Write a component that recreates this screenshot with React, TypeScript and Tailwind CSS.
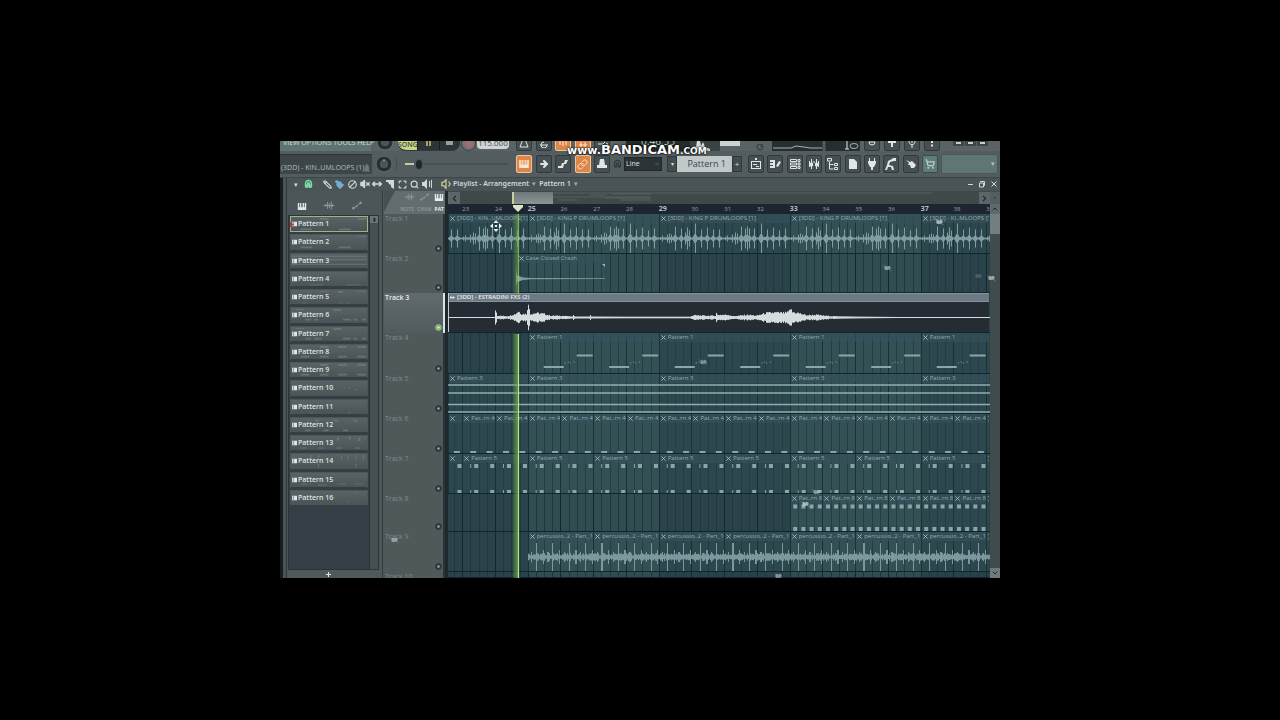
import type { ReactNode } from 'react';
import {
  ArrowRight,
  Ban,
  ChevronDown,
  ChevronLeft,
  ChevronRight,
  ChevronUp,
  Link,
  Magnet,
  Maximize,
  MoveHorizontal,
  Paintbrush,
  Pencil,
  Search,
  ShoppingCart,
  VolumeX,
} from 'lucide-react';

const VIEW_START = 22.566;
const BAR_PX = 32.75;
const VIEW_PX = 542;
const VIEW_BARS = VIEW_PX / BAR_PX;

const barToPx = (bar: number) => (bar - VIEW_START) * BAR_PX;
const barToPct = (bar: number) => `${((bar - VIEW_START) / VIEW_BARS) * 100}%`;
const spanToPct = (bars: number) => `${(bars / VIEW_BARS) * 100}%`;

interface ClipData {
  start: number;
  end: number;
  name: string;
}

interface TrackData {
  name: string;
  height: string;
  px: number;
  clips: ClipData[];
  art?: ReactNode;
}

const repeatClips = (from: number, step: number, name: string, first?: string): ClipData[] => {
  const clips: ClipData[] = first === undefined ? [] : [{ start: VIEW_START, end: from, name: first }];
  for (let bar = from; bar < 39.1; bar += step) {
    clips.push({ start: bar, end: Math.min(bar + step, 39.1), name });
  }
  return clips;
};

// [x, half height] pairs over the four bars of the drum loop
const DRUM_PEAKS: [number, number][] = [
  [3, 3], [8, 4], [10, 5], [12, 4], [16, 12], [22, 10], [26, 6], [28, 11], [30, 8], [36, 15],
  [42, 9], [48, 11], [54, 9], [60, 9], [66, 2], [68, 3], [73, 4], [76, 6], [78, 5], [82, 12],
  [86, 10], [88, 12], [90, 10], [95, 10], [102, 15], [108, 9], [114, 11], [120, 8], [126, 10],
];

const noise = (n: number) => {
  const v = Math.sin(n * 12.9898) * 43758.5453;
  return v - Math.floor(v);
};

function drumPath() {
  let d = '';
  for (let x = 0; x < VIEW_PX; x += 1) {
    const phase = (((x - barToPx(25)) % 131) + 131) % 131;
    let h = 0.8 + noise(Math.round(phase)) * 0.8;
    DRUM_PEAKS.forEach(([px, ph]) => {
      const dist = Math.abs(phase - px);
      if (dist < 0.6) h = Math.max(h, ph);
      else if (dist < 3) h = Math.max(h, (ph * 0.26 * (3.2 - dist)) / 2.2);
    });
    d += `M${x + 0.5} ${24.5 - h}V${24.5 + h}`;
  }
  return d;
}

function percussionPath() {
  let d = '';
  for (let x = Math.round(barToPx(25)); x < VIEW_PX; x += 1) {
    const phase = (x - barToPx(25)) % 16.375;
    let h = 1.5 + noise(x) * 2.5;
    if (Math.abs(phase - 8.3) < 0.6) h = 14;
    else if (Math.abs(phase - 15) < 0.6) h = 7;
    else if (Math.abs(phase - 3.5) < 0.6) h = 5;
    d += `M${x + 0.5} ${25 - h}V${25 + h}`;
  }
  return d;
}

const FX_ENVELOPE: [number, number][] = [
  [0, 0.5], [46, 0.5], [47, 8], [48, 7], [49, 2], [60, 1.5], [64, 3], [67, 4], [70, 7], [73, 4], [78, 4],
  [79, 11], [80, 13], [81, 10], [82, 4], [88, 5], [96, 4], [102, 2], [112, 2], [124, 1], [125, 2.5],
  [127, 1], [141, 1], [142, 2.5], [143, 1], [180, 0.8], [242, 0.8], [245, 2.5], [258, 2], [267, 2],
  [268, 5], [269, 3], [280, 3], [285, 1.5], [300, 3], [308, 2], [318, 5], [328, 5.5], [336, 5], [340, 6],
  [342, 10], [344, 6], [350, 5], [358, 2.5], [368, 3], [376, 2], [390, 1.2], [410, 0.9], [450, 0.5], [542, 0.5],
];

function fxPath() {
  let d = '';
  for (let i = 0; i < FX_ENVELOPE.length - 1; i += 1) {
    const [x0, h0] = FX_ENVELOPE[i];
    const [x1, h1] = FX_ENVELOPE[i + 1];
    for (let x = x0; x < x1; x += 1) {
      const base = h0 + ((h1 - h0) * (x - x0)) / (x1 - x0);
      const h = base > 1.5 ? base * (0.65 + noise(x) * 0.45) : base;
      d += `M${x + 0.5} ${24.5 - h}V${24.5 + h}`;
    }
  }
  return d;
}

const steps = (from: number, to: number, by: number) => {
  const out: number[] = [];
  for (let v = from; v < to; v += by) out.push(v);
  return out;
};

const NOTE = '#8ba5a8';

const TRACKS: TrackData[] = [
  {
    name: 'Track 1',
    height: 'h-10',
    px: 40,
    clips: [
      { start: VIEW_START, end: 25, name: '[3DD] - KIN..UMLOOPS[1]' },
      { start: 25, end: 29, name: '[3DD] - KING P DRUMLOOPS [1]' },
      { start: 29, end: 33, name: '[3DD] - KING P DRUMLOOPS [1]' },
      { start: 33, end: 37, name: '[3DD] - KING P DRUMLOOPS [1]' },
      { start: 37, end: 39.1, name: '[3DD] - KI..MLOOPS [1]' },
    ],
    art: <path d={drumPath()} stroke="#829da1" fill="none" />,
  },
  {
    name: 'Track 2',
    height: 'h-[39px]',
    px: 39,
    clips: [{ start: 24.66, end: 27.36, name: 'Case Closed Crash' }],
    art: (
      <>
        <path d="M68 15l1 6l2 1l4 1.500l8 .6l74 .2v.8l-74 .2l-8 .6l-4 1.500l-2 1l-1 4z" fill="#7f9c9d" />
        <path d="M154 10h3v3z" fill="#9db3b5" />
      </>
    ),
  },
  {
    name: 'Track 3',
    height: 'h-10',
    px: 40,
    clips: [{ start: VIEW_START, end: 39.1, name: '[3DD] - ESTRADINI FXS (2)' }],
    art: <path d={fxPath()} stroke="#d5dcdf" fill="none" />,
  },
  {
    name: 'Track 4',
    height: 'h-[41px]',
    px: 41,
    clips: repeatClips(25, 4, 'Pattern 1'),
    art: steps(25, 39, 2).map((bar) => (
      <g key={bar} transform={`translate(${barToPx(bar)} 0)`} fill={NOTE}>
        <path d="M16 33h20v2h-20zM49 21.500h16v2h-16z" />
        <path d="M37 29h1v2h-1zM40 28h1v2h-1zM42 29h1v2h-1zM46 28h1v2h-1z" opacity=".5" />
      </g>
    )),
  },
  {
    name: 'Track 5',
    height: 'h-10',
    px: 40,
    clips: repeatClips(25, 4, 'Pattern 3', 'Pattern 3'),
    art: <path d="M0 11h542M0 19h542M0 30.500h542M0 38h542" stroke="#8fadaf" strokeWidth="1.6" />,
  },
  {
    name: 'Track 6',
    height: 'h-10',
    px: 40,
    clips: repeatClips(23, 1, 'Pat..rn 4', ''),
    art: steps(22.5, 39, 0.5).map((bar) => (
      <rect key={bar} x={barToPx(bar) + 8} y="37" width="6" height="2" fill={NOTE} />
    )),
  },
  {
    name: 'Track 7',
    height: 'h-10',
    px: 40,
    clips: repeatClips(23, 2, 'Pattern 5', ''),
    art: steps(22, 39, 1).map((bar) => (
      <path
        key={bar}
        transform={`translate(${barToPx(bar)} 0)`}
        d="M8 10h1v4h-1zM12 10h4v4h-4zM28 10h4v4h-4zM8 36h1v3h-1zM12 36h4v3h-4zM28 36h4v3h-4z"
        fill={NOTE}
      />
    )),
  },
  {
    name: 'Track 8',
    height: 'h-[38px]',
    px: 38,
    clips: repeatClips(33, 1, 'Pat..rn 8'),
    art: steps(33, 39, 0.25).map((bar) => (
      <path
        key={bar}
        transform={`translate(${barToPx(bar)} 0)`}
        d="M3.500 10.500h4v4h-4zM3.500 33h4v4h-4z"
        fill={NOTE}
      />
    )),
  },
  {
    name: 'Track 9',
    height: 'h-10',
    px: 40,
    clips: repeatClips(25, 2, 'percussio..2 - Part_1'),
    art: <path d={percussionPath()} stroke="#7d989c" fill="none" />,
  },
  { name: 'Track 10', height: 'h-[6px]', px: 6, clips: [] },
];

const LONG_MARKS = [25, 29, 33, 37];

const PATTERNS: { name: string; art: string }[] = [
  { name: 'Pattern 1', art: 'M30 1h9v2h-9zM69 1h9v2h-9zM10 13h12v2h-12zM50 13h12v2h-12z' },
  { name: 'Pattern 2', art: 'M30 1h9v1h-9zM69 1h9v1h-9zM10 13h12v2h-12zM50 13h12v2h-12z' },
  { name: 'Pattern 3', art: 'M0 2h79v1h-79zM0 6h79v1h-79zM0 11h79v1h-79z' },
  { name: 'Pattern 4', art: 'M19 14h15v1h-15zM58 14h15v1h-15z' },
  { name: 'Pattern 5', art: 'M30 1h9v1h-9zM49 1h5v2h-5zM70 1h7v1h-7zM12 14h4v1h-4zM50 14h4v1h-4zM57 14h3v1h-3z' },
  { name: 'Pattern 6', art: 'M5 1h9v1h-9zM44 1h8v2h-8zM15 12h6v2h-6zM24 12h4v2h-4zM54 12h8v2h-8zM65 12h4v2h-4zM74 12h4v2h-4z' },
  { name: 'Pattern 7', art: 'M5 1h9v1h-9zM44 1h8v2h-8zM15 12h6v2h-6zM24 12h8v2h-8zM54 12h8v2h-8zM65 12h4v2h-4zM74 12h4v2h-4z' },
  { name: 'Pattern 8', art: 'M30 1h9v2h-9zM49 1h9v2h-9zM69 1h9v2h-9zM10 12h9v2h-9zM30 12h9v2h-9zM49 12h9v2h-9zM69 12h9v2h-9z' },
  { name: 'Pattern 9', art: 'M30 1h9v2h-9zM49 1h9v2h-9zM69 1h9v2h-9zM10 12h9v2h-9zM30 12h9v2h-9zM49 12h9v2h-9zM69 12h9v2h-9z' },
  { name: 'Pattern 10', art: 'M44 9h2v1h-2zM54 8h2v1h-2zM60 7h2v1h-2zM66 9h2v1h-2z' },
  { name: 'Pattern 11', art: 'M20 14h3v1h-3zM59 14h3v1h-3z' },
  { name: 'Pattern 12', art: 'M25 2h4v2h-4zM45 2h4v2h-4zM65 2h4v2h-4zM15 13h5v2h-5zM34 13h5v2h-5zM54 13h5v2h-5z' },
  { name: 'Pattern 13', art: 'M48 2h2v3h-2zM60 1h2v3h-2zM70 2h2v4h-2zM10 13h6v1h-6zM28 13h6v1h-6zM47 13h6v1h-6zM66 13h6v1h-6z' },
  { name: 'Pattern 14', art: 'M20 1h1v5h-1zM28 1h1v4h-1zM52 2h1v5h-1zM59 1h1v6h-1zM67 2h1v5h-1zM75 1h1v6h-1zM28 11h1v4h-1zM67 11h1v4h-1z' },
  { name: 'Pattern 15', art: 'M10 12h8v1h-8zM28 13h9v1h-9zM48 12h9v1h-9zM66 12h10v1h-10z' },
  { name: 'Pattern 16', art: 'M44 7h2v1h-2zM67 1h2v1h-2zM58 12h2v1h-2z' },
];

function PianoIcon({ className }: { className: string }) {
  return (
    <svg viewBox="0 0 12 10" className={className} fill="currentColor">
      <path d="M0 0h2v6h1v-6h1.500v6h1v-6h1v6h1v-6h1.500v6h1v-6h2v10h-12z" />
    </svg>
  );
}

function WaveIcon({ className }: { className: string }) {
  return (
    <svg viewBox="0 0 12 10" className={className} stroke="currentColor" fill="none">
      <path d="M0 5h12M2.500 3.500v3M4.500 1v8M6.500 2.500v5M8.500 0.500v9M10 3.500v3" />
    </svg>
  );
}

function AutomationIcon({ className }: { className: string }) {
  return (
    <svg viewBox="0 0 12 10" className={className} stroke="currentColor" fill="currentColor">
      <path d="M2 8l3-2l5-4" fill="none" />
      <circle cx="2" cy="8" r="1" />
      <circle cx="5.500" cy="6" r=".6" />
      <circle cx="10" cy="2" r="1" />
    </svg>
  );
}

function Knob({ label }: { label: string }) {
  return (
    <button aria-label={label} className="flex items-center justify-center">
      <svg viewBox="0 0 18 18" className="size-[18px]">
        <circle cx="9" cy="9" r="8" fill="#2a3235" stroke="#6a7678" strokeWidth=".8" />
        <circle cx="9" cy="9" r="5" fill="#4a5558" stroke="#1c2326" />
        <path d="M9 4v2.500" stroke="#aab4b5" />
      </svg>
    </button>
  );
}

interface ToolButtonProps {
  label: string;
  active?: boolean;
  muted?: boolean;
  children: ReactNode;
}

function ToolButton({ label, active, muted, children }: ToolButtonProps) {
  const tone = active
    ? 'border-[#f3c39a] bg-[#de8648] text-[#fbe9d8]'
    : muted
      ? 'border-[#3c4a4b] bg-[#5f7d78] text-[#bccdca]'
      : 'border-[#30393b] bg-[#465052] text-[#dfe6e6]';
  return (
    <button
      aria-label={label}
      className={`flex h-[18px] w-4 shrink-0 items-center justify-center rounded-xs border ${tone}`}
    >
      {children}
    </button>
  );
}

function Glyph({ d, stroke }: { d: string; stroke?: boolean }) {
  return (
    <svg
      viewBox="0 0 12 12"
      className="size-3"
      fill={stroke ? 'none' : 'currentColor'}
      stroke={stroke ? 'currentColor' : 'none'}
    >
      <path d={d} />
    </svg>
  );
}

function TopRow() {
  return (
    <div className="flex h-[10px] items-end overflow-hidden bg-[#596365]">
      <div className="flex h-[18px] w-[91px] shrink-0 items-center bg-[#5d7471] pl-[3px] text-[7px] leading-none whitespace-nowrap text-[#d5dfdd]">
        VIEW OPTIONS TOOLS HELP
      </div>
      <div className="flex w-[27px] shrink-0 justify-center">
        <Knob label="Master volume" />
      </div>
      <div className="flex h-5 w-[62px] shrink-0 items-end overflow-hidden rounded-b-lg border-b border-[#30393b] bg-[#2c3437]">
        <button className="h-4 w-[19px] rounded-bl-lg bg-[#c5d68c] pt-[6px] text-[7px] leading-[8px] font-semibold text-[#46502f]">
          SONG
        </button>
        <button aria-label="Play" className="flex h-5 flex-1 justify-center border-x border-[#171d20] pt-2">
          <span className="h-2 w-[5px] border-x-2 border-[#a99f62]" />
        </button>
        <button aria-label="Stop" className="flex h-5 flex-1 justify-center pt-2">
          <span className="h-[7px] w-[7px] bg-[#959f9f]" />
        </button>
      </div>
      <button aria-label="Record" className="mx-[1px] flex size-[15px] shrink-0 items-center justify-center rounded-full border border-[#394244] bg-[#6b7476]">
        <span className="size-2 rounded-full bg-[#a06e6e]" />
      </button>
      <div className="mb-[2px] h-4 w-8 shrink-0 overflow-hidden rounded-sm bg-[#cfd5d5] pt-[5px] text-center text-[8px] leading-[10px] text-[#3f484a]">
        115.000
      </div>
      <div className="ml-[7px] flex w-[94px] shrink-0 justify-between">
        <ToolButton label="Metronome"><Glyph stroke d="M2 11l3-8h2l3 8z" /></ToolButton>
        <ToolButton label="Wait for input"><Glyph stroke d="M2 9h8M6 6a3 3 0 1 0 3 3" /></ToolButton>
        <ToolButton label="Count in" active><Glyph stroke d="M3 3v6M6 5v5M9 3v6" /></ToolButton>
        <ToolButton label="Loop record" active><Glyph stroke d="M2 9h8M4 6v5M8 6v5" /></ToolButton>
        <ToolButton label="Step edit"><Glyph stroke d="M2 8h5l2-2M8 9a2 2 0 1 0 2-2" /></ToolButton>
      </div>
      <div className="ml-4 flex h-5 w-[64px] shrink-0 items-center justify-center bg-[#232b2e] text-[10px] leading-none text-[#b8c6a6]">
        0:46:35
      </div>
      <svg viewBox="0 0 30 10" className="h-[10px] w-[30px] shrink-0 bg-[#394346]" fill="#d7dedf">
        <path d="M2 8l2-3l2 1l1-6h3l1 5l2-4l2 5l5 2v2z" />
      </svg>
      <div className="mb-[5px] h-2 w-5 shrink-0 bg-[#cbd3d3]" />
      <svg viewBox="0 0 8 8" className="ml-4 size-[8px] shrink-0" fill="none" stroke="#2f383a">
        <circle cx="4" cy="4" r="3" />
        <path d="M4 4l2-1.500" />
      </svg>
      <svg viewBox="0 0 88 10" className="ml-2 h-[10px] w-[88px] shrink-0 bg-[#262e31]" fill="none" stroke="#a3b1b1">
        <path d="M1 7h18l5-2l8 1l6 1h12" />
        <path d="M52 0v10" stroke="#515c5f" strokeWidth="3" />
        <path d="M75 0v8M73 8h4" stroke="#e2e8e8" />
        <ellipse cx="82" cy="5" rx="4" ry="2.500" />
      </svg>
      <div className="ml-1 flex w-[76px] shrink-0 justify-between">
        <ToolButton label="Undo"><Glyph stroke d="M3 6a3 3 0 1 0 6 0M3 6h6" /></ToolButton>
        <ToolButton label="Save"><Glyph d="M5 2h2v3h3v2h-3v4h-2v-4h-3v-2h3z" /></ToolButton>
        <ToolButton label="Microphone"><Glyph stroke d="M3 5c0 5 6 5 6 0M6 9v3M6 2v5" /></ToolButton>
        <ToolButton label="Help"><Glyph d="M5 3h2v4h-2zM5 8.500h2v2h-2z" /></ToolButton>
      </div>
      <div className="ml-auto flex gap-[1px] self-start pr-3">
        {['Minimize', 'Restore', 'Close'].map((label) => (
          <button key={label} aria-label={label} className="flex h-[5px] w-[11px] justify-center bg-[#3c4648]">
            <span className="mt-[1px] h-[2px] w-[5px] bg-[#c5cdcd]" />
          </button>
        ))}
      </div>
    </div>
  );
}

function MainToolbar() {
  return (
    <div className="flex h-[27px] items-center border-b border-[#3c4648] bg-[#535d5f]">
      <div className="flex h-5 w-[92px] shrink-0 items-end justify-between border-t border-[#2c3537] bg-[#3c4648] pr-[2px] pb-[1px] pl-[1px]">
        <span className="text-[7px] leading-[10px] whitespace-nowrap text-[#b3bdbd]">(3DD) - KIN..UMLOOPS (1)</span>
        <svg viewBox="0 0 8 10" className="h-[10px] w-[6px]" fill="#6e7a7b">
          <path d="M2 0h4v3h1v5h1v2h-8v-2h1v-5h1z" />
        </svg>
      </div>
      <div className="flex w-6 shrink-0 justify-center">
        <Knob label="Master pitch" />
      </div>
      <div className="flex w-[120px] shrink-0 items-center border-l border-[#464f51] px-2">
        <input
          type="range"
          aria-label="Main volume"
          defaultValue={10}
          className="h-3 w-full appearance-none rounded-sm bg-[linear-gradient(90deg,#c3d09a_9%,#475153_9%)] bg-[length:100%_2px] bg-center bg-no-repeat [&::-webkit-slider-thumb]:h-[11px] [&::-webkit-slider-thumb]:w-2 [&::-webkit-slider-thumb]:appearance-none [&::-webkit-slider-thumb]:rounded-full [&::-webkit-slider-thumb]:border [&::-webkit-slider-thumb]:border-[#4e5a5c] [&::-webkit-slider-thumb]:bg-[#20282b]"
        />
      </div>
      <div className="flex w-[94px] shrink-0 justify-between">
        <ToolButton label="Typing keyboard" active><PianoIcon className="h-2 w-3" /></ToolButton>
        <ToolButton label="Step"><ArrowRight size={10} strokeWidth={5} /></ToolButton>
        <ToolButton label="Slide"><Glyph d="M1 10v-2h3l1-3h2l1-3h3l-2 4h-2l-1 4z" /></ToolButton>
        <ToolButton label="Link" active><Link size={11} strokeWidth={2} /></ToolButton>
        <ToolButton label="Stamp"><Glyph d="M4 1h4l1 6h2v3h-10v-3h2z" /></ToolButton>
      </div>
      <div className="flex w-[14px] shrink-0 justify-center text-[#313a3c]">
        <Magnet size={9} strokeWidth={3} className="rotate-[-45deg]" />
      </div>
      <div className="relative flex w-[38px] shrink-0">
        <select
          aria-label="Snap"
          defaultValue="Line"
          className="h-[14px] w-full appearance-none border border-[#20282a] bg-[#2b3335] pl-[1px] text-[7px] leading-[12px] text-[#dfe6e6]"
        >
          <option>Line</option>
          <option>Beat</option>
        </select>
        <ChevronDown size={6} className="pointer-events-none absolute top-1 right-[2px] text-[#8c9798]" />
      </div>
      <div className="ml-[5px] flex shrink-0">
        <button aria-label="Previous pattern" className="flex h-4 w-[10px] items-center justify-center border border-[#2f383a] bg-[#424c4e] text-[6px] text-[#d5dcdc]">▾</button>
        <button className="h-4 w-[55px] bg-[#c0c8ca] pr-[6px] text-right text-[9px] leading-4 whitespace-nowrap text-[#3c4648]">
          Pattern 1
        </button>
        <button aria-label="Add pattern" className="flex h-4 w-[10px] items-center justify-center border border-[#2f383a] bg-[#424c4e] text-[8px] leading-none text-[#d5dcdc]">+</button>
      </div>
      <div className="ml-[6px] flex w-[190px] shrink-0 justify-between">
        <ToolButton label="Playlist"><Glyph d="M5 0h2v2h-2zM1 3h10v1h-10zM1 4h1v7h-1zM10 4h1v7h-1zM1 10h10v1h-10zM3 6h4v1h-4zM6 8h3v1h-3z" /></ToolButton>
        <ToolButton label="Piano roll"><Glyph d="M1 2h5v8h-5v-2h3v-1h-3v-2h3v-1h-3zM7 8l3-5l2 1l-3 5z" /></ToolButton>
        <ToolButton label="Channel rack"><Glyph stroke d="M1.500 1.500h6v2h-6zM1.500 5h6v2h-6zM1.500 8.500h6v2h-6zM9 1.500h2v2h-2zM9 5h2v2h-2zM9 8.500h2v2h-2z" /></ToolButton>
        <ToolButton label="Mixer"><Glyph stroke d="M3.500 1v10M8.500 1v10M1.500 3v6M10.500 3v6M6 3v2M2.500 5h2v3h-2zM7.500 5h2v3h-2z" /></ToolButton>
        <ToolButton label="Browser"><Glyph stroke d="M.5.500h4v2.500h-4zM2.500 4v7h4M2.500 6.500h4M7.500 5.500h3v2h-3zM7.500 9.500h3v2h-3z" /></ToolButton>
        <ToolButton label="New file"><Glyph d="M2 1h5l3 3v7h-8z" /></ToolButton>
        <ToolButton label="Plugins"><Glyph d="M3 0h1v3h4v-3h1v3h1v2l-2 4h-1v3h-2v-3h-1l-2-4v-2h1z" /></ToolButton>
        <ToolButton label="Performance"><Glyph d="M8 0h3v3h-2l-4 1l-1 3l4 1l1 4h-2l-1-3h-3l-1 3h-2l2-5l1-4l4-2z" /></ToolButton>
        <ToolButton label="Touch"><Glyph d="M1 2l4 2l2-1l4 4l-2 3h-3l-1-3h-2l1-2z" /></ToolButton>
        <ToolButton label="Shop" muted><ShoppingCart size={10} strokeWidth={3} /></ToolButton>
      </div>
      <div className="mr-[2px] ml-[3px] flex h-5 flex-1 items-center justify-end border border-[#46585a] bg-[#5f7673] pr-[2px] text-[7px] text-[#b5c3c0]">
        ▾
      </div>
    </div>
  );
}

function TitleBar() {
  const tool = 'flex w-[12px] justify-center';
  return (
    <div className="flex h-[13px] items-center bg-[#4a5456] pb-px text-[#d0d8d8]">
      <div className="flex items-center pl-[3px]">
        <button aria-label="Menu" className="w-[12px] text-center text-[7px] leading-none">▾</button>
        <button aria-label="Snap to grid" className="flex w-[12px] justify-center text-[#7fdca6]"><Magnet size={9} strokeWidth={4} className="rotate-[-45deg]" /></button>
      </div>
      <div className="ml-[7px] flex w-[112px] items-center justify-between">
        <button aria-label="Draw" className={tool}><Pencil size={9} strokeWidth={3} className="-scale-x-100" /></button>
        <button aria-label="Paint" className="flex w-[12px] justify-center text-[#6fb3d4]"><Paintbrush size={9} strokeWidth={3} fill="currentColor" className="-scale-x-100" /></button>
        <button aria-label="Delete" className={tool}><Ban size={9} strokeWidth={3} className="-scale-x-100" /></button>
        <button aria-label="Mute" className={tool}><VolumeX size={10} strokeWidth={3} fill="currentColor" /></button>
        <button aria-label="Slip" className={tool}><MoveHorizontal size={10} strokeWidth={4} /></button>
        <button aria-label="Slice" className={tool}><Glyph d="M2 2h8v9l-3-2v-2l-2-1l-1-2h-2z" /></button>
        <button aria-label="Select" className={tool}><Maximize size={9} strokeWidth={3} /></button>
        <button aria-label="Zoom" className={tool}><Search size={9} strokeWidth={3} /></button>
        <button aria-label="Playback" className={tool}><Glyph d="M1 4h2l3-3v10l-3-3h-2zM8 3h1v6h-1zM10 2h1v8h-1z" /></button>
      </div>
      <svg viewBox="0 0 12 12" className="ml-2 size-[10px]" fill="none" stroke="#c9cf8e" strokeWidth="1.500">
        <path d="M1 4h2l3-3v10l-3-3h-2zM9 3l2 3l-2 3" />
      </svg>
      <div className="flex items-center gap-[3px] pl-[2px] font-['Noto_Sans',sans-serif] text-[7px] leading-[12px] font-semibold whitespace-nowrap">
        <span>Playlist - Arrangement</span>
        <span className="font-normal text-[#a0abab]">▾</span>
        <span>Pattern 1</span>
        <span className="font-normal text-[#a0abab]">▾</span>
      </div>
      <div className="ml-auto flex items-center gap-[4px] pr-[2px]">
        <button aria-label="Minimize playlist" className="flex w-2 justify-center"><span className="h-[1px] w-[5px] bg-current" /></button>
        <button aria-label="Restore playlist" className="flex w-2 justify-center"><svg viewBox="0 0 8 8" className="size-2" fill="none" stroke="currentColor"><path d="M2.500 2.500v-1h4v4h-1M1.500 3h4v4h-4z" /></svg></button>
        <button aria-label="Close playlist" className="flex w-2 justify-center"><svg viewBox="0 0 8 8" className="size-2" stroke="currentColor"><path d="M1.500 1.500l5 5M6.500 1.500l-5 5" /></svg></button>
      </div>
    </div>
  );
}

function PatternItem({ name, art, selected }: { name: string; art: string; selected: boolean }) {
  return (
    <li className="flex flex-1 pb-[2px]">
      <button
        className={`relative flex w-full items-center border bg-linear-to-b from-[#596365] to-[#4a5456] ${
          selected ? 'border-[#a3b183]' : 'border-[#4d5759] border-b-[#353f41]'
        }`}
      >
        <svg viewBox="0 0 79 16" preserveAspectRatio="none" className="absolute inset-0 h-full w-full" fill="#7a8586" opacity=".6">
          <path d={art} />
        </svg>
        <svg viewBox="0 0 7 6" className="relative ml-[1px] h-[6px] w-[5px] shrink-0" fill="#e1e7e7">
          <path d="M0 0h7v6h-7zM1 1v1h2v-1zM1 2.500v1h2v-1zM1 4v1h2v-1z" fillRule="evenodd" />
        </svg>
        <span className="relative pl-[1px] text-[7px] leading-[12px] font-semibold whitespace-nowrap text-[#dce3e3]">{name}</span>
        {selected && (
          <svg viewBox="0 0 6 8" className="absolute top-1 -left-[1px] h-[7px] w-1" fill="#c8323f">
            <path d="M0 0l6 4l-6 4z" />
          </svg>
        )}
      </button>
    </li>
  );
}

function PatternPicker() {
  return (
    <aside className="flex w-[96px] shrink-0 flex-col border-r border-[#333d40] bg-[#4c5658]">
      <div className="flex h-[24px] items-end gap-4 pb-[5px] pl-[10px] text-[#919c9d]">
        <button aria-label="Patterns" className="text-[#e2e8e8]"><PianoIcon className="h-[7px] w-[10px]" /></button>
        <button aria-label="Audio clips"><WaveIcon className="h-[9px] w-3" /></button>
        <button aria-label="Automation clips"><AutomationIcon className="h-[9px] w-3" /></button>
      </div>
      <div className="mr-[3px] ml-[1px] flex flex-1 border border-[#2c3639] bg-[#343f45]">
        <ul className="flex h-[292px] flex-1 flex-col pl-[1px]">
          {PATTERNS.map((p, i) => (
            <PatternItem key={p.name} name={p.name} art={p.art} selected={i === 0} />
          ))}
        </ul>
        <div className="ml-[1px] w-[9px] border-l border-[#2c3639] bg-[#465053]">
          <div className="h-[7px] bg-[#697476] text-center text-[5px] leading-[7px] text-[#20282a]">▮</div>
        </div>
      </div>
      <button aria-label="Add" className="flex h-[8px] items-center justify-center bg-[#4f595b] pr-3 text-[#e2e8e8]">
        <svg viewBox="0 0 5 5" className="size-[5px]" fill="currentColor"><path d="M2 0h1v2h2v1h-2v2h-1v-2h-2v-1h2z" /></svg>
      </button>
    </aside>
  );
}

function TrackHeaders() {
  return (
    <div className="flex w-[61px] shrink-0 flex-col bg-[#4f595a]">
      <div className="h-[23px] bg-[#465052]">
        <div className="flex h-full flex-col items-end justify-between bg-[#626d70] py-[2px] pr-[1px] [clip-path:polygon(18%_0,100%_0,100%_100%,0_100%,0_90%)]">
          <div className="flex items-center gap-1 text-[#8d989a]">
            <WaveIcon className="h-2 w-[11px]" />
            <AutomationIcon className="h-2 w-[11px]" />
            <PianoIcon className="h-[7px] w-[10px] text-[#e8eded]" />
          </div>
          <div className="flex gap-[3px] text-[5px] leading-[6px] font-bold text-[#88939a]">
            <span>NOTE</span>
            <span>CHAN</span>
            <span className="text-[#e8eded]">PAT</span>
          </div>
        </div>
      </div>
      {TRACKS.map((t) => {
        const on = t.name === 'Track 3';
        return (
          <div
            key={t.name}
            className={`relative flex justify-between overflow-hidden border-r-2 pl-[1px] ${t.height} ${
              on ? 'border-[#dbe2e3] bg-linear-to-b from-[#616b6d] to-[#525c5e]' : 'border-[#2a3337]'
            }`}
          >
            <div className="flex flex-col justify-between pb-[2px]">
              <span className={`text-[7px] leading-[10px] whitespace-nowrap ${on ? 'font-semibold text-[#e6ebeb]' : 'text-[#7f8a8b]'}`}>
                {t.name}
              </span>
              {t.px > 10 && <span className="pl-[6px] text-[6px] leading-[4px] text-[#2f393b]">...</span>}
            </div>
            {t.px > 10 && (
              <button aria-label={`Mute ${t.name}`} className="mr-[1px] mb-[2px] self-end">
                <svg viewBox="0 0 7 7" className="size-[7px]" fill={on ? '#6c9f58' : '#333d3f'} stroke={on ? '#a7d68c' : '#242d2f'}>
                  <circle cx="3.500" cy="3.500" r="2.800" />
                  <circle cx="3.500" cy="3.500" r="1.200" fill={on ? '#e8f7dc' : '#9aa5a5'} stroke="none" />
                </svg>
              </button>
            )}
          </div>
        );
      })}
    </div>
  );
}

function Clip({ clip, focused }: { clip: ClipData; focused: boolean }) {
  return (
    <div
      className={`absolute inset-y-0 overflow-hidden border-l ${
        focused ? 'border-[#c5ced2] bg-[#252c33]' : 'border-[#1d3138] bg-[#3f6266]/15'
      }`}
      style={{ left: barToPct(clip.start), width: spanToPct(clip.end - clip.start) }}
    >
      <div
        className={`flex h-[9px] items-center gap-[2px] overflow-hidden pl-[1px] text-[6px] leading-[9px] whitespace-nowrap ${
          focused
            ? 'border-y border-[#8593a0] bg-[#6c7a83] font-semibold text-[#e8edef]'
            : 'bg-[#34505a]/70 text-[#97abae]'
        }`}
      >
        <svg viewBox="0 0 6 6" className="size-[5px] shrink-0" fill="none" stroke={focused ? '#e8edef' : '#b3c2c4'}>
          <path d={focused ? 'M0 3h6M1 1v4M3 1.500l2 1.500l-2 1.500' : 'M.5 .5l5 5M5.500 .5l-5 5'} />
        </svg>
        <span>{clip.name}</span>
      </div>
    </div>
  );
}

function Lane({ track }: { track: TrackData }) {
  return (
    <div className={`relative border-b border-[#13252c] ${track.height}`}>
      {track.clips.map((clip) => (
        <Clip key={clip.start} clip={clip} focused={track.name === 'Track 3'} />
      ))}
      <svg
        viewBox={`0 0 ${VIEW_PX} ${track.px - 1}`}
        preserveAspectRatio="none"
        className="absolute inset-0 h-full w-full"
      >
        {track.art}
      </svg>
    </div>
  );
}

function Grid() {
  return (
    <div className="absolute inset-0 bg-[#2a424a]">
      {[25, 33].map((bar) => (
        <div
          key={bar}
          className="absolute inset-y-0 bg-[#324d52]"
          style={{ left: barToPct(bar), width: spanToPct(4) }}
        />
      ))}
      {steps(22.75, 39.1, 0.25).map((bar) => (
        <div
          key={bar}
          className={`absolute inset-y-0 w-px ${Number.isInteger(bar) ? 'bg-[#14272f]' : 'bg-[#20373f]'}`}
          style={{ left: barToPct(bar) }}
        />
      ))}
    </div>
  );
}

function Timeline() {
  return (
    <div className="relative min-w-0 flex-1 overflow-hidden">
      <div className="flex h-[13px] bg-[#3e494a] pt-[1px]">
        <button aria-label="Scroll left" className="flex h-3 w-3 items-center justify-center bg-[#5b6668] text-[#20282a]">
          <ChevronLeft size={9} strokeWidth={3} />
        </button>
        <div className="relative flex-1">
          <div className="absolute inset-y-0 left-[10%] w-[8%] border-l-2 border-[#c7cf9e] bg-linear-to-b from-[#6c7779] to-[#8a9596]" />
          <svg viewBox="0 0 520 12" preserveAspectRatio="none" className="absolute inset-0 h-full w-full" fill="none" stroke="#5b6868">
            <path d="M93 1h380M93 5h98M98 8h20M130 3h16M145 6h46M153 2h38M160 8h31" opacity=".8" />
          </svg>
        </div>
        <button aria-label="Scroll right" className="flex h-3 w-[11px] items-center justify-center bg-[#5b6668] text-[#20282a]">
          <ChevronRight size={9} strokeWidth={3} />
        </button>
      </div>
      <div className="relative h-[10px] overflow-hidden bg-[#1d2530]">
        {steps(23, 39.2, 1).map((bar) => (
          <span
            key={bar}
            className={`absolute leading-[10px] ${
              LONG_MARKS.includes(bar) ? 'text-[7px] font-bold text-[#b4bfc4]' : 'text-[6px] text-[#98a4aa]'
            }`}
            style={{ left: barToPct(bar) }}
          >
            {bar}
          </span>
        ))}
      </div>
      <div className="relative">
        <Grid />
        {TRACKS.map((t) => (
          <Lane key={t.name} track={t} />
        ))}
        <div
          className="absolute top-0 h-[80px] w-[6px] border-r border-[#9fd66c]/70 bg-linear-to-r from-[#5f9a3c]/10 to-[#6fae45]/60"
          style={{ left: barToPct(24.54) }}
        />
        <div
          className="absolute top-[120px] bottom-0 w-[6px] border-r border-[#b7e886] bg-linear-to-r from-[#5f9a3c]/20 to-[#6fae45]/80"
          style={{ left: barToPct(24.54) }}
        />
        <svg
          viewBox="0 0 10 7"
          className="absolute -top-[9px] h-[7px] w-[10px] -translate-x-1/2"
          style={{ left: barToPct(24.7) }}
          fill="#dfe6c2"
        >
          <path d="M0 0h10v2l-5 5l-5-5z" />
        </svg>
        <svg viewBox="0 0 12 12" className="absolute top-[6px] size-3 -translate-x-1/2" style={{ left: barToPct(24.03) }} fill="#eef2f2">
          <path d="M6 0l2.500 3h-5zM6 12l2.500-3h-5zM0 6l3-2.500v5zM12 6l-3-2.500v5zM5 5h2v2h-2z" />
        </svg>
      </div>
    </div>
  );
}

function VerticalScroll() {
  return (
    <div className="flex w-[10px] shrink-0 flex-col bg-[#404b4c] pt-[1px] text-[#20282a]">
      <div className="h-3 bg-[#535e60] text-center text-[6px] leading-3">•</div>
      <button aria-label="Scroll up" className="flex h-[10px] items-center justify-center bg-[#5f6a6c]"><ChevronUp size={8} strokeWidth={3} /></button>
      <div className="h-5 bg-[#727f82]" />
      <button aria-label="Scroll down" className="mt-auto flex h-[10px] items-center justify-center bg-[#6e7a7d]"><ChevronDown size={8} strokeWidth={3} /></button>
    </div>
  );
}

// Snow specks drifting over the window, in percent of the frame
const FLAKES: { x: number; y: number; o: number }[] = [
  { x: 91.5, y: 18.5, o: 0.8 },
  { x: 84.3, y: 29, o: 0.6 },
  { x: 98.8, y: 31.3, o: 0.7 },
  { x: 97, y: 31, o: 0.2 },
  { x: 58.7, y: 50.5, o: 0.5 },
  { x: 74.5, y: 80.4, o: 0.6 },
  { x: 72.9, y: 83, o: 0.8 },
  { x: 15.8, y: 91.3, o: 0.6 },
  { x: 69.1, y: 99.6, o: 0.6 },
];

export default function App() {
  return (
    <main className="flex min-h-screen items-center justify-center bg-black pb-px font-['Liberation_Sans_Narrow','Open_Sans',sans-serif]">
      <div className="relative w-[56.25%] min-w-[720px] overflow-hidden bg-[#4a5456]">
        <TopRow />
        <MainToolbar />
        <div className="flex">
          <div className="w-[3px] shrink-0 bg-[#171d21]" />
          <div className="w-[4px] shrink-0 border-r border-[#30393c] bg-[#4a5456]" />
          <div className="min-w-0 flex-1">
            <TitleBar />
            <div className="flex">
              <PatternPicker />
              <div className="w-[1px] shrink-0 bg-[#4f595b]" />
              <div className="flex min-w-0 flex-1">
                <TrackHeaders />
                <div className="w-[3px] shrink-0 bg-[#1e282d]" />
                <Timeline />
                <VerticalScroll />
              </div>
            </div>
          </div>
        </div>
        <div className="pointer-events-none absolute top-1 left-[287px] flex items-baseline font-['DejaVu_Sans',sans-serif] leading-[10px] font-bold whitespace-nowrap text-white [text-shadow:0_0_2px_#000,0_0_2px_#000]">
          <span className="text-[11px]">www.</span>
          <span className="text-[13px]">BANDICAM</span>
          <span className="text-[9px]">.COM</span>
        </div>
        {FLAKES.map((f) => (
          <svg
            key={`${f.x}-${f.y}`}
            viewBox="0 0 10 8"
            className="pointer-events-none absolute h-[7px] w-[9px] -translate-x-1/2 -translate-y-1/2"
            style={{ left: `${f.x}%`, top: `${f.y}%`, opacity: f.o }}
            fill="#c3d0d3"
          >
            <path d="M2 2l2-.5l1 1l2-1l2 1v2l-1 1.500h-2l-2 .5l-2-1z" />
            <path d="M0 1h1v1h-1zM9 6h1v1h-1z" />
          </svg>
        ))}
      </div>
    </main>
  );
}
